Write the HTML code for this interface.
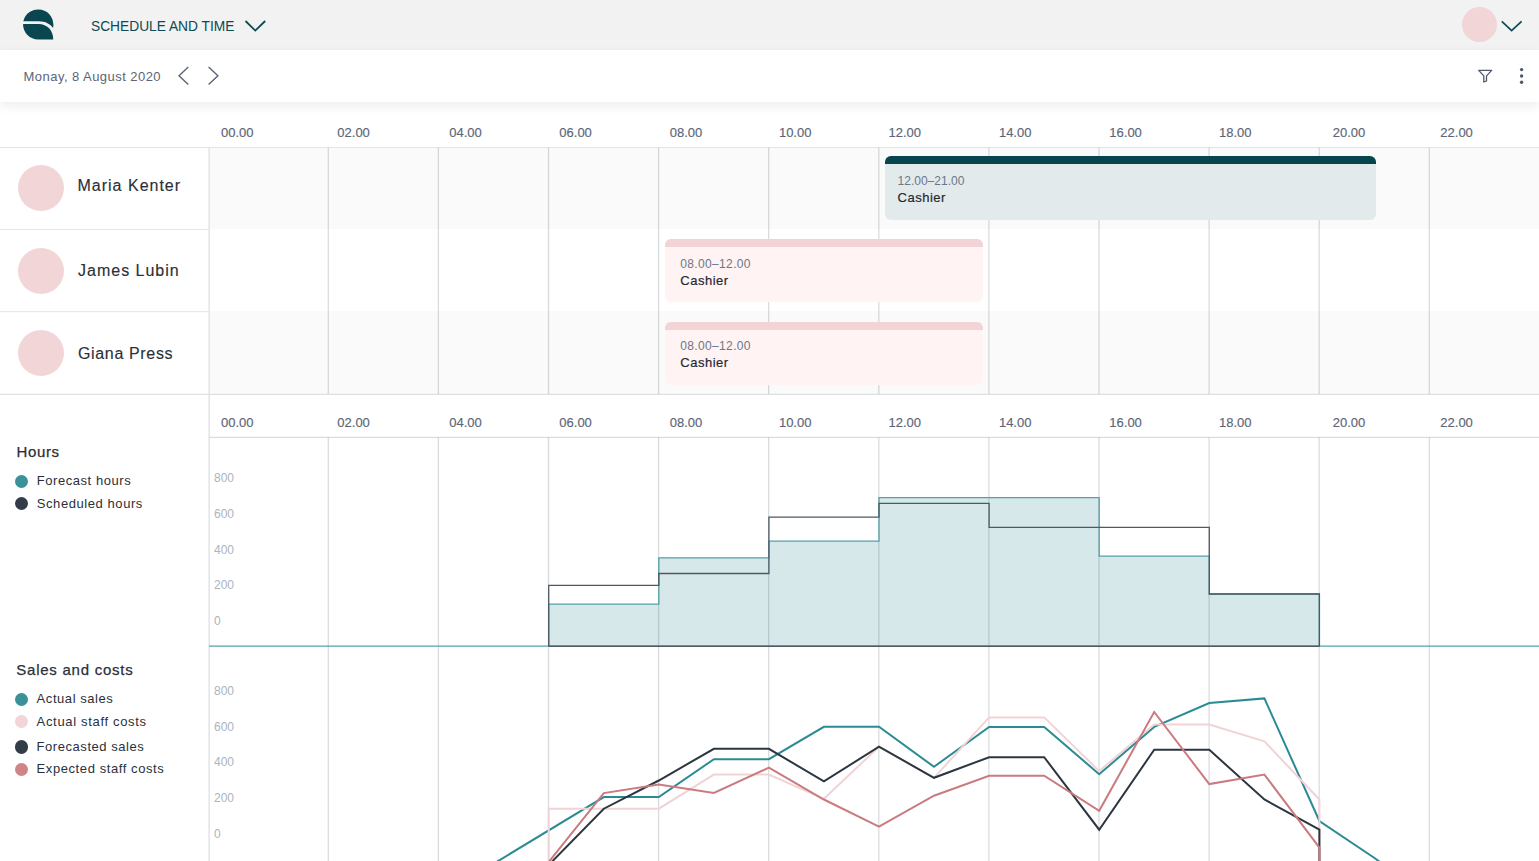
<!DOCTYPE html>
<html><head><meta charset="utf-8"><style>
html,body{margin:0;padding:0;width:1539px;height:861px;overflow:hidden;background:#fff}
.t{position:absolute;white-space:nowrap;font-family:"Liberation Sans", sans-serif}
.r{position:absolute}
</style></head><body>
<div class="r" style="left:0px;top:0px;width:1539px;height:50px;background:#f2f2f2"></div><div class="r" style="left:0px;top:50px;width:1539px;height:52px;background:#fff;box-shadow:0 4px 11px rgba(0,0,0,0.075);z-index:2"></div><svg class="r" style="left:23.3px;top:9.2px;z-index:3" width="31.4" height="31.4" viewBox="0 0 32 32"><path fill="#0a4650" d="M0.3,12.6 L16,12.6 C23,12.6 28,15.5 30.6,19.4 A15.5 15.5 0 1 0 0.3,12.6 Z"/><path fill="#0a4650" d="M0.05,15.4 L16,15.4 C24.5,15.4 30.8,22 30.8,31 L15.5,31 A15.5 15.5 0 0 1 0.05,15.4 Z"/></svg><div class="t" style="left:91.0px;top:18.00px;font-size:15.5px;line-height:15.5px;color:#0c4a52;letter-spacing:0px;font-weight:400;z-index:3;transform:scaleX(0.887);transform-origin:0 0">SCHEDULE AND TIME</div><svg class="r" style="left:244px;top:19px;z-index:3" width="24" height="14" viewBox="0 0 24 14"><path d="M1.5,2 L11.3,11.6 L21.2,2" fill="none" stroke="#0c4a52" stroke-width="1.8"/></svg><div class="r" style="left:1462px;top:7px;width:35px;height:35px;border-radius:50%;background:#f2d5d7;z-index:3"></div><svg class="r" style="left:1500px;top:19px;z-index:3" width="24" height="14" viewBox="0 0 24 14"><path d="M1.8,2.3 L11.6,11.6 L21.6,2.3" fill="none" stroke="#0c4a52" stroke-width="1.7"/></svg><div class="t" style="left:23.6px;top:70.00px;font-size:13px;line-height:13px;color:#5b6577;letter-spacing:0.45px;font-weight:400;z-index:3">Monay, 8 August 2020</div><svg class="r" style="left:176px;top:65px;z-index:3" width="46" height="22" viewBox="0 0 46 22"><path d="M12.3,2 L3,10.8 L12.3,19.6" fill="none" stroke="#5b6577" stroke-width="1.4"/><path d="M32.6,2 L41.9,10.8 L32.6,19.6" fill="none" stroke="#5b6577" stroke-width="1.4"/></svg><svg class="r" style="left:1470px;top:60px;z-index:3" width="69" height="35" viewBox="0 0 69 35"><path d="M8.7,10.4 L21.7,10.4 L16.5,15.9 L16.5,21 L13.8,22 L13.8,15.9 Z" fill="none" stroke="#4d586b" stroke-width="1.3" stroke-linejoin="round"/><circle cx="51.6" cy="9.6" r="1.7" fill="#4d586b"/><circle cx="51.6" cy="16" r="1.7" fill="#4d586b"/><circle cx="51.6" cy="22.2" r="1.7" fill="#4d586b"/></svg><div class="r" style="left:209px;top:147px;width:1330px;height:82px;background:#fafafa"></div><div class="r" style="left:209px;top:311px;width:1330px;height:83px;background:#fafafa"></div><svg class="r" style="left:0;top:0" width="1539" height="861" viewBox="0 0 1539 861"><line x1="0" y1="147.5" x2="1539" y2="147.5" stroke="#e3e6e9" stroke-width="1"/><line x1="0" y1="229.5" x2="209" y2="229.5" stroke="#e3e6e9" stroke-width="1"/><line x1="0" y1="311.7" x2="209" y2="311.7" stroke="#e3e6e9" stroke-width="1"/><line x1="0" y1="394.3" x2="1539" y2="394.3" stroke="#dde1e4" stroke-width="1.2"/><line x1="209" y1="437.4" x2="1539" y2="437.4" stroke="#d9dde0" stroke-width="1.3"/><line x1="209.1" y1="147" x2="209.1" y2="861" stroke="#dde1e4" stroke-width="1.3"/><line x1="328.30" y1="147.5" x2="328.30" y2="394" stroke="rgba(20,40,50,0.16)" stroke-width="1.3"/><line x1="438.40" y1="147.5" x2="438.40" y2="394" stroke="rgba(20,40,50,0.16)" stroke-width="1.3"/><line x1="548.50" y1="147.5" x2="548.50" y2="394" stroke="rgba(20,40,50,0.16)" stroke-width="1.3"/><line x1="658.60" y1="147.5" x2="658.60" y2="394" stroke="rgba(20,40,50,0.16)" stroke-width="1.3"/><line x1="768.70" y1="147.5" x2="768.70" y2="394" stroke="rgba(20,40,50,0.16)" stroke-width="1.3"/><line x1="878.80" y1="147.5" x2="878.80" y2="394" stroke="rgba(20,40,50,0.16)" stroke-width="1.3"/><line x1="988.90" y1="147.5" x2="988.90" y2="394" stroke="rgba(20,40,50,0.16)" stroke-width="1.3"/><line x1="1099.00" y1="147.5" x2="1099.00" y2="394" stroke="rgba(20,40,50,0.16)" stroke-width="1.3"/><line x1="1209.10" y1="147.5" x2="1209.10" y2="394" stroke="rgba(20,40,50,0.16)" stroke-width="1.3"/><line x1="1319.20" y1="147.5" x2="1319.20" y2="394" stroke="rgba(20,40,50,0.16)" stroke-width="1.3"/><line x1="1429.30" y1="147.5" x2="1429.30" y2="394" stroke="rgba(20,40,50,0.16)" stroke-width="1.3"/></svg><div class="t" style="left:137.3px;width:200px;text-align:center;top:126.00px;font-size:13px;line-height:13px;color:#5b6577;letter-spacing:0px;font-weight:400;-webkit-text-stroke:0.15px #5b6577">00.00</div><div class="t" style="left:137.3px;width:200px;text-align:center;top:416.00px;font-size:13px;line-height:13px;color:#5b6577;letter-spacing:0px;font-weight:400;-webkit-text-stroke:0.15px #5b6577">00.00</div><div class="t" style="left:253.6px;width:200px;text-align:center;top:126.00px;font-size:13px;line-height:13px;color:#5b6577;letter-spacing:0px;font-weight:400;-webkit-text-stroke:0.15px #5b6577">02.00</div><div class="t" style="left:253.6px;width:200px;text-align:center;top:416.00px;font-size:13px;line-height:13px;color:#5b6577;letter-spacing:0px;font-weight:400;-webkit-text-stroke:0.15px #5b6577">02.00</div><div class="t" style="left:365.5px;width:200px;text-align:center;top:126.00px;font-size:13px;line-height:13px;color:#5b6577;letter-spacing:0px;font-weight:400;-webkit-text-stroke:0.15px #5b6577">04.00</div><div class="t" style="left:365.5px;width:200px;text-align:center;top:416.00px;font-size:13px;line-height:13px;color:#5b6577;letter-spacing:0px;font-weight:400;-webkit-text-stroke:0.15px #5b6577">04.00</div><div class="t" style="left:475.6px;width:200px;text-align:center;top:126.00px;font-size:13px;line-height:13px;color:#5b6577;letter-spacing:0px;font-weight:400;-webkit-text-stroke:0.15px #5b6577">06.00</div><div class="t" style="left:475.6px;width:200px;text-align:center;top:416.00px;font-size:13px;line-height:13px;color:#5b6577;letter-spacing:0px;font-weight:400;-webkit-text-stroke:0.15px #5b6577">06.00</div><div class="t" style="left:586.0px;width:200px;text-align:center;top:126.00px;font-size:13px;line-height:13px;color:#5b6577;letter-spacing:0px;font-weight:400;-webkit-text-stroke:0.15px #5b6577">08.00</div><div class="t" style="left:586.0px;width:200px;text-align:center;top:416.00px;font-size:13px;line-height:13px;color:#5b6577;letter-spacing:0px;font-weight:400;-webkit-text-stroke:0.15px #5b6577">08.00</div><div class="t" style="left:695.2px;width:200px;text-align:center;top:126.00px;font-size:13px;line-height:13px;color:#5b6577;letter-spacing:0px;font-weight:400;-webkit-text-stroke:0.15px #5b6577">10.00</div><div class="t" style="left:695.2px;width:200px;text-align:center;top:416.00px;font-size:13px;line-height:13px;color:#5b6577;letter-spacing:0px;font-weight:400;-webkit-text-stroke:0.15px #5b6577">10.00</div><div class="t" style="left:804.8px;width:200px;text-align:center;top:126.00px;font-size:13px;line-height:13px;color:#5b6577;letter-spacing:0px;font-weight:400;-webkit-text-stroke:0.15px #5b6577">12.00</div><div class="t" style="left:804.8px;width:200px;text-align:center;top:416.00px;font-size:13px;line-height:13px;color:#5b6577;letter-spacing:0px;font-weight:400;-webkit-text-stroke:0.15px #5b6577">12.00</div><div class="t" style="left:915.2px;width:200px;text-align:center;top:126.00px;font-size:13px;line-height:13px;color:#5b6577;letter-spacing:0px;font-weight:400;-webkit-text-stroke:0.15px #5b6577">14.00</div><div class="t" style="left:915.2px;width:200px;text-align:center;top:416.00px;font-size:13px;line-height:13px;color:#5b6577;letter-spacing:0px;font-weight:400;-webkit-text-stroke:0.15px #5b6577">14.00</div><div class="t" style="left:1025.6px;width:200px;text-align:center;top:126.00px;font-size:13px;line-height:13px;color:#5b6577;letter-spacing:0px;font-weight:400;-webkit-text-stroke:0.15px #5b6577">16.00</div><div class="t" style="left:1025.6px;width:200px;text-align:center;top:416.00px;font-size:13px;line-height:13px;color:#5b6577;letter-spacing:0px;font-weight:400;-webkit-text-stroke:0.15px #5b6577">16.00</div><div class="t" style="left:1135.3px;width:200px;text-align:center;top:126.00px;font-size:13px;line-height:13px;color:#5b6577;letter-spacing:0px;font-weight:400;-webkit-text-stroke:0.15px #5b6577">18.00</div><div class="t" style="left:1135.3px;width:200px;text-align:center;top:416.00px;font-size:13px;line-height:13px;color:#5b6577;letter-spacing:0px;font-weight:400;-webkit-text-stroke:0.15px #5b6577">18.00</div><div class="t" style="left:1249.0px;width:200px;text-align:center;top:126.00px;font-size:13px;line-height:13px;color:#5b6577;letter-spacing:0px;font-weight:400;-webkit-text-stroke:0.15px #5b6577">20.00</div><div class="t" style="left:1249.0px;width:200px;text-align:center;top:416.00px;font-size:13px;line-height:13px;color:#5b6577;letter-spacing:0px;font-weight:400;-webkit-text-stroke:0.15px #5b6577">20.00</div><div class="t" style="left:1356.6px;width:200px;text-align:center;top:126.00px;font-size:13px;line-height:13px;color:#5b6577;letter-spacing:0px;font-weight:400;-webkit-text-stroke:0.15px #5b6577">22.00</div><div class="t" style="left:1356.6px;width:200px;text-align:center;top:416.00px;font-size:13px;line-height:13px;color:#5b6577;letter-spacing:0px;font-weight:400;-webkit-text-stroke:0.15px #5b6577">22.00</div><div class="r" style="left:18px;top:165px;width:46px;height:46px;border-radius:50%;background:#f2d5d7"></div><div class="t" style="left:77.5px;top:178.00px;font-size:16px;line-height:16px;color:#2b3038;letter-spacing:1.0px;font-weight:400;-webkit-text-stroke:0.15px #2b3038">Maria Kenter</div><div class="r" style="left:18px;top:247.5px;width:46px;height:46px;border-radius:50%;background:#f2d5d7"></div><div class="t" style="left:78.0px;top:263.00px;font-size:16px;line-height:16px;color:#2b3038;letter-spacing:1.0px;font-weight:400;-webkit-text-stroke:0.15px #2b3038">James Lubin</div><div class="r" style="left:18px;top:330px;width:46px;height:46px;border-radius:50%;background:#f2d5d7"></div><div class="t" style="left:78.0px;top:346.00px;font-size:16px;line-height:16px;color:#2b3038;letter-spacing:0.65px;font-weight:400;-webkit-text-stroke:0.15px #2b3038">Giana Press</div><div class="r" style="left:885px;top:156px;width:491px;height:64px;border-radius:6px;background:#e3eaec;overflow:hidden"><div style="height:7.5px;background:#07444e"></div></div><div class="t" style="left:897.6px;top:175.00px;font-size:12px;line-height:12px;color:#6a778a;letter-spacing:0px;font-weight:400;">12.00–21.00</div><div class="t" style="left:897.6px;top:191.00px;font-size:13px;line-height:13px;color:#24282e;letter-spacing:0.5px;font-weight:400;-webkit-text-stroke:0.18px #24282e">Cashier</div><div class="r" style="left:665px;top:239px;width:318px;height:63px;border-radius:6px;background:#fff3f3;overflow:hidden"><div style="height:7.5px;background:#f2d4d6"></div></div><div class="t" style="left:680.3px;top:258.00px;font-size:12px;line-height:12px;color:#6a778a;letter-spacing:0.35px;font-weight:400;">08.00–12.00</div><div class="t" style="left:680.3px;top:274.00px;font-size:13px;line-height:13px;color:#24282e;letter-spacing:0.5px;font-weight:400;-webkit-text-stroke:0.18px #24282e">Cashier</div><div class="r" style="left:665px;top:322px;width:318px;height:63px;border-radius:6px;background:#fff3f3;overflow:hidden"><div style="height:7.5px;background:#f2d4d6"></div></div><div class="t" style="left:680.3px;top:340.00px;font-size:12px;line-height:12px;color:#6a778a;letter-spacing:0.35px;font-weight:400;">08.00–12.00</div><div class="t" style="left:680.3px;top:356.00px;font-size:13px;line-height:13px;color:#24282e;letter-spacing:0.5px;font-weight:400;-webkit-text-stroke:0.18px #24282e">Cashier</div><div class="t" style="left:16.6px;top:444.00px;font-size:15px;line-height:15px;color:#2b3038;letter-spacing:0.6px;font-weight:400;-webkit-text-stroke:0.25px #2b3038">Hours</div><div class="r" style="left:15.1px;top:474.7px;width:13.4px;height:13.4px;border-radius:50%;background:#3a9198"></div><div class="r" style="left:15.1px;top:497.1px;width:13.4px;height:13.4px;border-radius:50%;background:#323d48"></div><div class="t" style="left:36.8px;top:474.00px;font-size:13px;line-height:13px;color:#2b3038;letter-spacing:0.55px;font-weight:400;">Forecast hours</div><div class="t" style="left:36.8px;top:497.00px;font-size:13px;line-height:13px;color:#2b3038;letter-spacing:0.57px;font-weight:400;">Scheduled hours</div><div class="t" style="left:16.3px;top:662.00px;font-size:15px;line-height:15px;color:#2b3038;letter-spacing:0.75px;font-weight:400;-webkit-text-stroke:0.25px #2b3038">Sales and costs</div><div class="r" style="left:15.1px;top:692.5px;width:13.4px;height:13.4px;border-radius:50%;background:#3a9198"></div><div class="t" style="left:36.6px;top:692.00px;font-size:13px;line-height:13px;color:#2b3038;letter-spacing:0.56px;font-weight:400;">Actual sales</div><div class="r" style="left:15.1px;top:715.0px;width:13.4px;height:13.4px;border-radius:50%;background:#f2d5d7"></div><div class="t" style="left:36.6px;top:715.00px;font-size:13px;line-height:13px;color:#2b3038;letter-spacing:0.67px;font-weight:400;">Actual staff costs</div><div class="r" style="left:15.1px;top:740.4px;width:13.4px;height:13.4px;border-radius:50%;background:#323d48"></div><div class="t" style="left:36.6px;top:740.00px;font-size:13px;line-height:13px;color:#2b3038;letter-spacing:0.55px;font-weight:400;">Forecasted sales</div><div class="r" style="left:15.1px;top:762.7px;width:13.4px;height:13.4px;border-radius:50%;background:#cf8488"></div><div class="t" style="left:36.6px;top:762.00px;font-size:13px;line-height:13px;color:#2b3038;letter-spacing:0.58px;font-weight:400;">Expected staff costs</div><div class="t" style="left:214.0px;top:472.00px;font-size:12px;line-height:12px;color:#a9b5c0;letter-spacing:0px;font-weight:400;">800</div><div class="t" style="left:214.0px;top:508.00px;font-size:12px;line-height:12px;color:#a9b5c0;letter-spacing:0px;font-weight:400;">600</div><div class="t" style="left:214.0px;top:544.00px;font-size:12px;line-height:12px;color:#a9b5c0;letter-spacing:0px;font-weight:400;">400</div><div class="t" style="left:214.0px;top:579.00px;font-size:12px;line-height:12px;color:#a9b5c0;letter-spacing:0px;font-weight:400;">200</div><div class="t" style="left:214.0px;top:615.00px;font-size:12px;line-height:12px;color:#a9b5c0;letter-spacing:0px;font-weight:400;">0</div><div class="t" style="left:214.0px;top:685.00px;font-size:12px;line-height:12px;color:#a9b5c0;letter-spacing:0px;font-weight:400;">800</div><div class="t" style="left:214.0px;top:721.00px;font-size:12px;line-height:12px;color:#a9b5c0;letter-spacing:0px;font-weight:400;">600</div><div class="t" style="left:214.0px;top:756.00px;font-size:12px;line-height:12px;color:#a9b5c0;letter-spacing:0px;font-weight:400;">400</div><div class="t" style="left:214.0px;top:792.00px;font-size:12px;line-height:12px;color:#a9b5c0;letter-spacing:0px;font-weight:400;">200</div><div class="t" style="left:214.0px;top:828.00px;font-size:12px;line-height:12px;color:#a9b5c0;letter-spacing:0px;font-weight:400;">0</div><svg class="r" style="left:0;top:0" width="1539" height="861" viewBox="0 0 1539 861"><polygon points="548.7,646.2 548.7,604.2 658.8,604.2 658.8,557.8 768.9,557.8 768.9,541.2 879.0,541.2 879.0,497.7 989.1,497.7 989.1,497.7 1099.2,497.7 1099.2,556.2 1209.3,556.2 1209.3,594.0 1319.4,594.0 1319.4,646.2" fill="#d3e5e9" fill-opacity="0.9"/><line x1="328.30" y1="437.5" x2="328.30" y2="861" stroke="rgba(20,40,50,0.16)" stroke-width="1.3"/><line x1="438.40" y1="437.5" x2="438.40" y2="861" stroke="rgba(20,40,50,0.16)" stroke-width="1.3"/><line x1="548.50" y1="437.5" x2="548.50" y2="861" stroke="rgba(20,40,50,0.16)" stroke-width="1.3"/><line x1="658.60" y1="437.5" x2="658.60" y2="861" stroke="rgba(20,40,50,0.16)" stroke-width="1.3"/><line x1="768.70" y1="437.5" x2="768.70" y2="861" stroke="rgba(20,40,50,0.16)" stroke-width="1.3"/><line x1="878.80" y1="437.5" x2="878.80" y2="861" stroke="rgba(20,40,50,0.16)" stroke-width="1.3"/><line x1="988.90" y1="437.5" x2="988.90" y2="861" stroke="rgba(20,40,50,0.16)" stroke-width="1.3"/><line x1="1099.00" y1="437.5" x2="1099.00" y2="861" stroke="rgba(20,40,50,0.16)" stroke-width="1.3"/><line x1="1209.10" y1="437.5" x2="1209.10" y2="861" stroke="rgba(20,40,50,0.16)" stroke-width="1.3"/><line x1="1319.20" y1="437.5" x2="1319.20" y2="861" stroke="rgba(20,40,50,0.16)" stroke-width="1.3"/><line x1="1429.30" y1="437.5" x2="1429.30" y2="861" stroke="rgba(20,40,50,0.16)" stroke-width="1.3"/><line x1="209" y1="646.2" x2="1539" y2="646.2" stroke="#52a2a8" stroke-width="1.3"/><polyline points="548.7,646.2 548.7,604.2 658.8,604.2 658.8,557.8 768.9,557.8 768.9,541.2 879.0,541.2 879.0,497.7 989.1,497.7 989.1,497.7 1099.2,497.7 1099.2,556.2 1209.3,556.2 1209.3,594.0 1319.4,594.0 1319.4,646.2" fill="none" stroke="#52a2a8" stroke-width="1.3"/><polyline points="548.7,646.2 548.7,585.3 658.8,585.3 658.8,573.5 768.9,573.5 768.9,517.2 879.0,517.2 879.0,503.3 989.1,503.3 989.1,527.3 1099.2,527.3 1099.2,527.3 1209.3,527.3 1209.3,594.0 1319.4,594.0 1319.4,646.2" fill="none" stroke="#4d5a64" stroke-width="1.3"/><line x1="548.6999999999999" y1="646.2" x2="1319.4" y2="646.2" stroke="#4d5a64" stroke-width="1.5"/><polyline points="438.6,897.0 603.8,797.1 658.8,797.1 713.9,759.2 768.9,759.2 823.9,726.8 879.0,726.8 934.0,766.8 989.1,726.9 1044.2,726.9 1099.2,774.2 1154.2,726.9 1209.3,703.1 1264.4,698.4 1319.4,821.0 1374.5,858.0 1429.5,898.0" fill="none" stroke="#2b8b94" stroke-width="2"/><polyline points="548.7,900.0 548.7,808.7 658.8,808.7 713.9,774.6 768.9,774.6 823.9,798.8 879.0,746.7 934.0,777.8 989.1,717.4 1044.2,717.4 1099.2,771.1 1154.2,724.6 1209.3,724.6 1264.4,741.4 1319.4,799.5 1319.4,900.0" fill="none" stroke="#f2d3d5" stroke-width="2"/><polyline points="548.7,865.0 603.8,808.7 658.8,780.5 713.9,748.8 768.9,748.8 823.9,781.4 879.0,746.7 934.0,777.8 989.1,757.2 1044.2,757.2 1099.2,829.7 1154.2,749.8 1209.3,749.8 1264.4,799.5 1319.4,829.7 1319.4,900.0" fill="none" stroke="#2c3640" stroke-width="2"/><polyline points="548.7,862.0 603.8,793.1 658.8,784.5 713.9,792.9 768.9,767.7 823.9,799.5 879.0,826.6 934.0,795.7 989.1,775.7 1044.2,775.7 1099.2,810.8 1154.2,712.0 1209.3,784.1 1264.4,774.6 1319.4,847.6 1319.4,900.0" fill="none" stroke="#c97b80" stroke-width="2"/></svg>
</body></html>
